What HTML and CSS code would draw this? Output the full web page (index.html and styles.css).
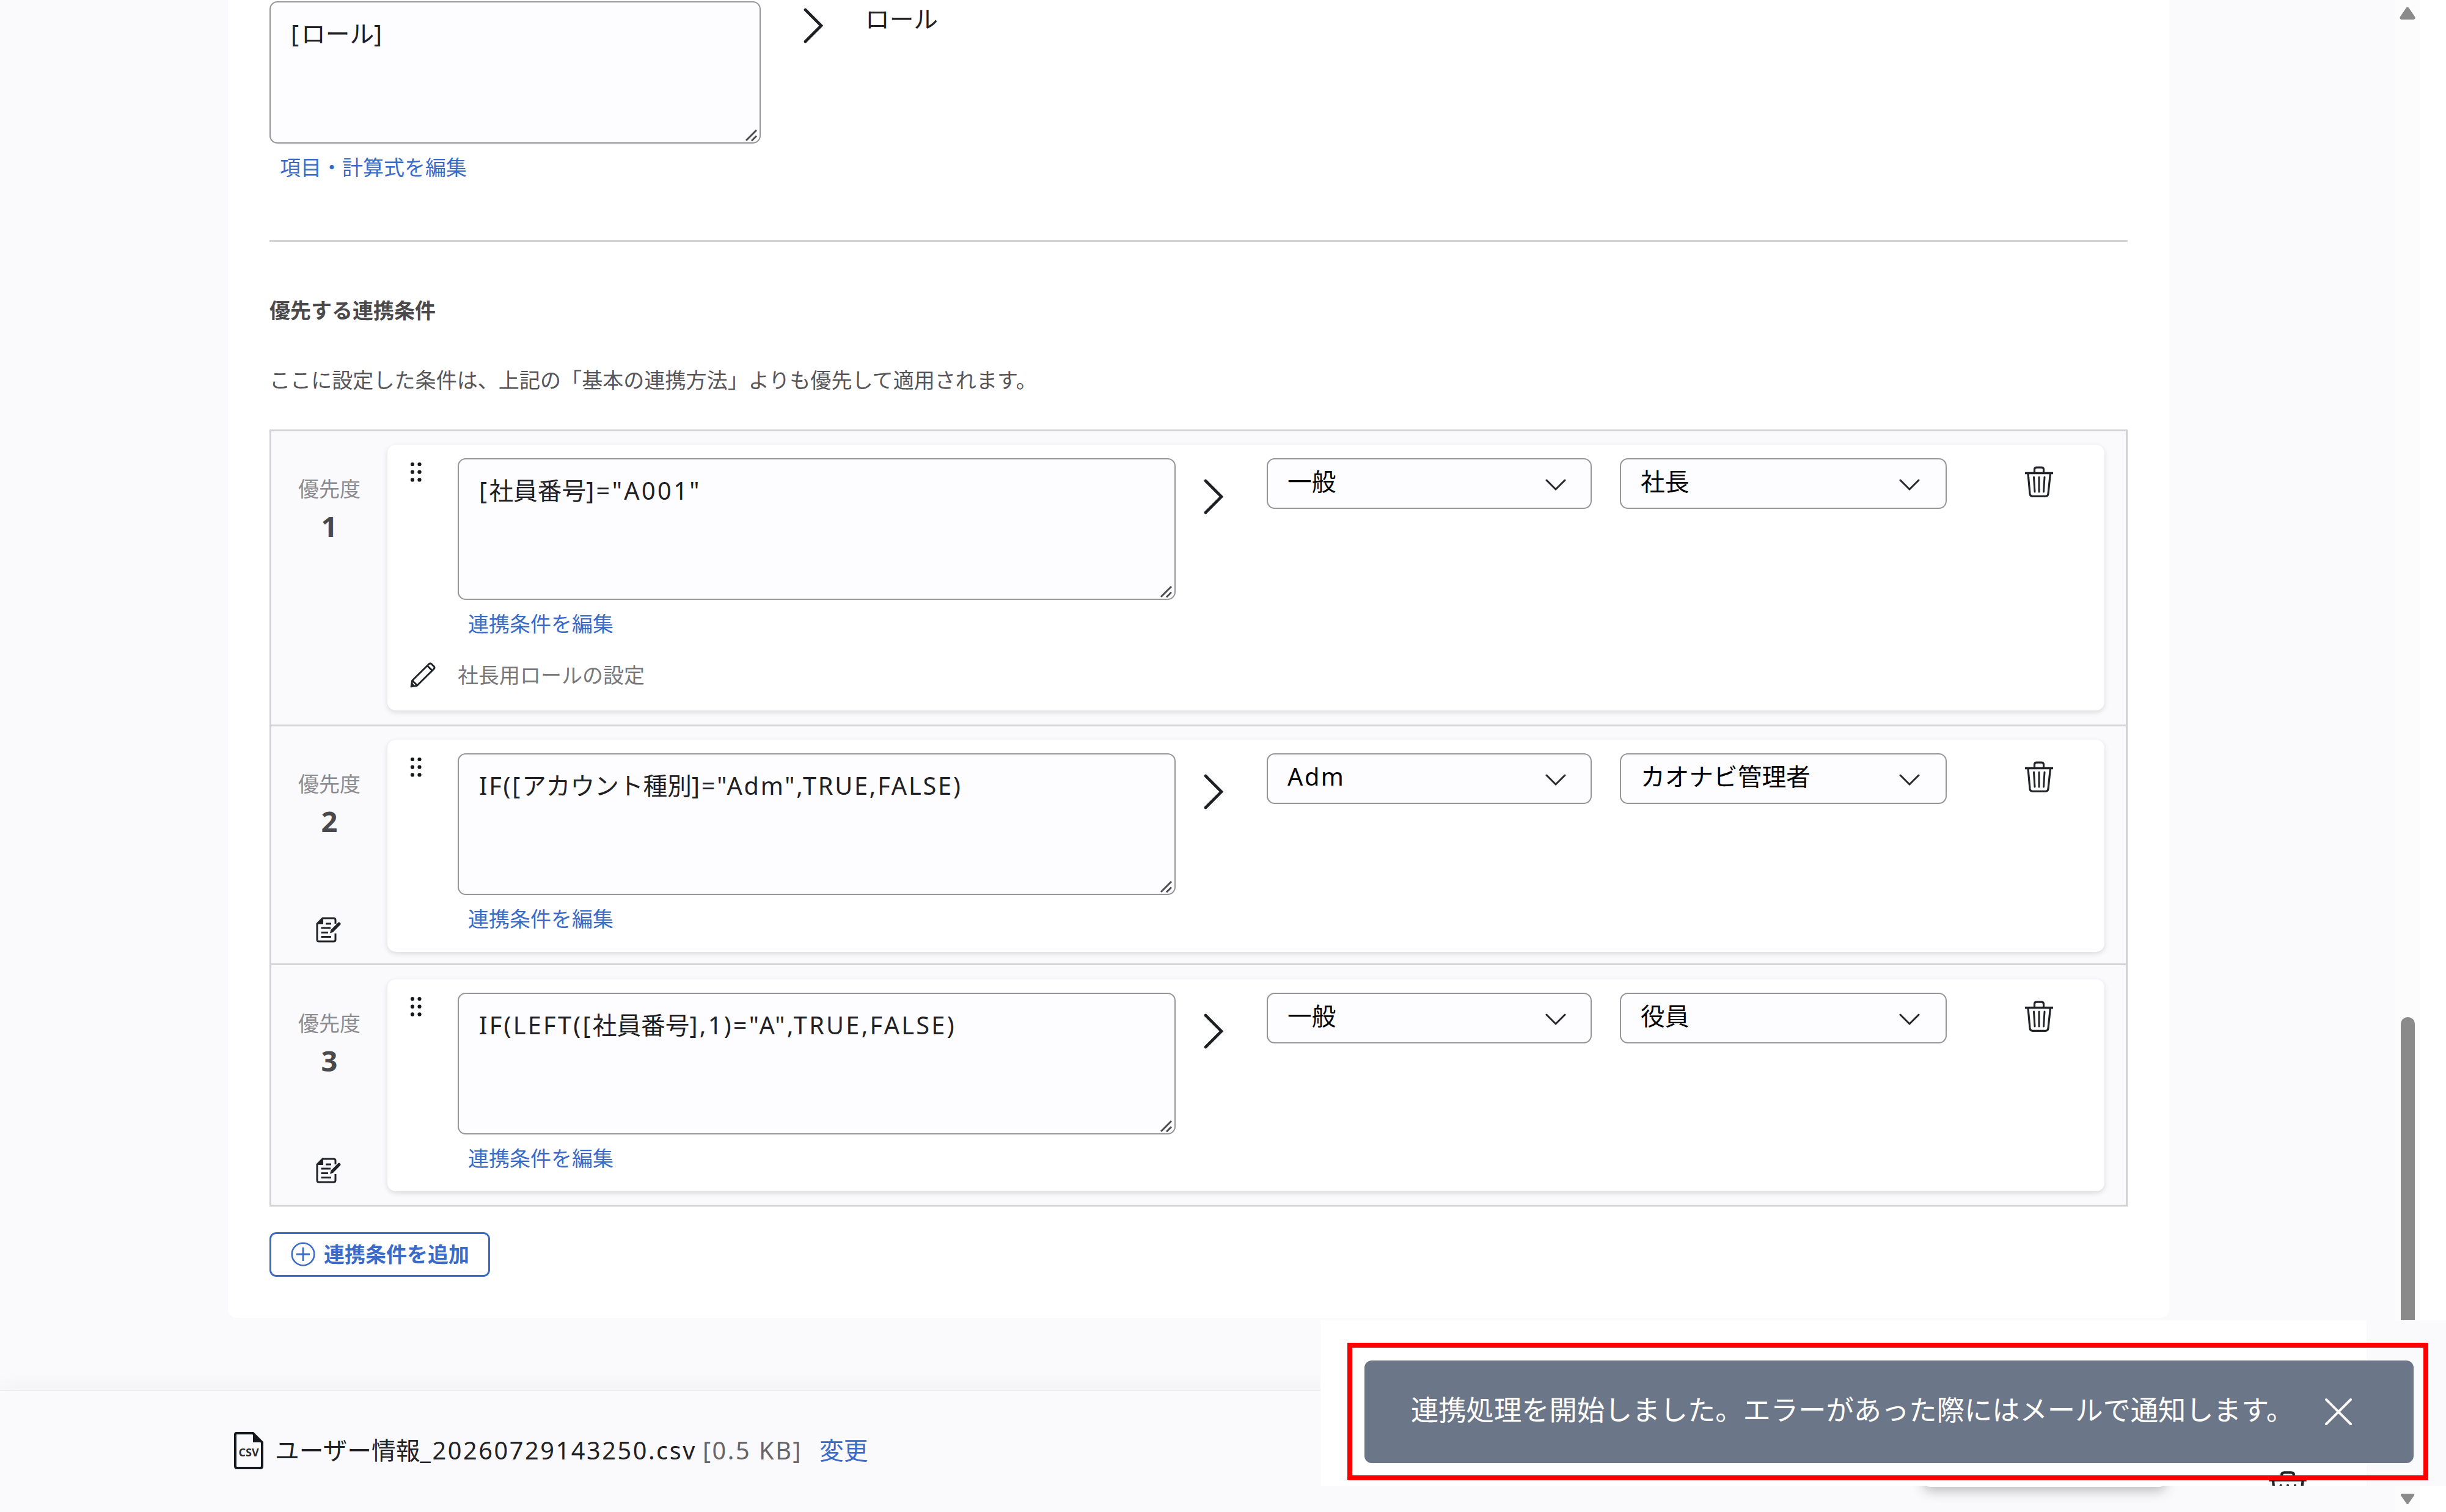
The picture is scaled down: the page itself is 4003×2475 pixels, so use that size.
FILE: index.html
```html
<!DOCTYPE html>
<html lang="ja">
<head>
  <meta charset="UTF-8" />
  <title>連携設定</title>
  <link rel="stylesheet" href="styles.css">
</head>
<body>
  <!-- icons -->
  <svg class="defs" width="0" height="0">
    <symbol id="i-arrow" viewBox="0 0 34 58">
      <path d="M3 3 L29 29 L3 55" fill="none" stroke="#1d1f24" stroke-width="4.6" stroke-linecap="round" />
    </symbol>
    <symbol id="i-chevron" viewBox="0 0 34 20">
      <path d="M2 2 L17 17 L32 2" fill="none" stroke="#25272c" stroke-width="3" stroke-linecap="round" />
    </symbol>
    <symbol id="i-resize" viewBox="0 0 22 22">
      <path d="M2 19 L19 2 M11 19.500 L19 11.500" fill="none" stroke="#4c4c4e" stroke-width="3" />
    </symbol>
    <symbol id="i-drag" viewBox="0 0 20 34">
      <g fill="#16181c">
        <circle cx="4" cy="4" r="3.1" /><circle cx="15.500" cy="4" r="3.100" />
        <circle cx="4" cy="16.700" r="3.100" /><circle cx="15.500" cy="16.700" r="3.100" />
        <circle cx="4" cy="29.400" r="3.100" /><circle cx="15.500" cy="29.400" r="3.100" />
      </g>
    </symbol>
    <symbol id="i-trash" viewBox="0 0 48 52">
      <g fill="none" stroke="#202328" stroke-width="3.2">
        <path d="M1 11.500 H47" stroke-width="3.600" />
        <path d="M16.500 11 V5.500 Q16.500 2.200 20 2.200 H28 Q31.500 2.200 31.500 5.500 V11" />
        <path d="M6 12 L9 45 Q9.500 49.300 13.500 49.300 H34.500 Q38.500 49.300 39 45 L42.500 12" />
        <path d="M15.500 18 L17 42 M24 18 V42 M33 18 L31.500 42" stroke-width="3" stroke-linecap="round" />
      </g>
    </symbol>
    <symbol id="i-pencil" viewBox="0 0 40 40">
      <g fill="none" stroke="#202328" stroke-width="2.800" stroke-linejoin="round">
        <path d="M2 38 L3.500 28.500 L29.500 2.800 Q31.500 1 33.500 2.800 L37.200 6.500 Q39 8.500 37.200 10.500 L11 36.500 Z" />
        <path d="M27 5.500 L34.500 13 M4 29 L11 36" />
      </g>
      <path d="M2 38 L3.200 32 L8 36.800 Z" fill="#202328" />
    </symbol>
    <symbol id="i-note" viewBox="0 0 42 42">
      <g fill="none" stroke="#202328" stroke-width="3">
        <path d="M32 11 V5 Q32 2 29 2 H11 L2 11 V37 Q2 40 5 40 H29 Q32 40 32 37 V27" />
        <path d="M16 11 H25 M8.500 18 H24 M8.500 25.500 H20 M8.500 32.500 H25" />
      </g>
      <path d="M2 12 L12 2 V12 Z" fill="#202328" />
      <path d="M23 26.500 L24.500 21 L36.500 9 Q38 8 39.500 9.500 Q41.500 11 40 12.700 L28 25 Z" fill="#202328" />
    </symbol>
  </svg>

  <div class="app">
    <div class="page">
      <main class="panel">
        <div class="mapping">
          <div class="mapping-source">
            <div class="formula formula-small"><span class="en">[</span>ロール<span class="en">]</span><svg class="resize"><use href="#i-resize" /></svg></div>
            <a class="link">項目・計算式を編集</a>
          </div>
          <svg class="arrow"><use href="#i-arrow" /></svg>
          <div class="mapping-target">ロール</div>
        </div>

        <h2>優先する連携条件</h2>
        <p class="lead">ここに設定した条件は、上記の「基本の連携方法」よりも優先して適用されます。</p>

        <div class="rules">
          <div class="rule rule-noted">
            <div class="rule-side">
              <span class="rule-label">優先度</span>
              <span class="rule-no">1</span>
            </div>
            <div class="rule-card">
              <svg class="drag"><use href="#i-drag" /></svg>
              <div class="rule-body">
                <div class="formula"><span class="en">[</span>社員番号<span class="en">]="A001"</span><svg class="resize"><use href="#i-resize" /></svg></div>
                <a class="link">連携条件を編集</a>
                <div class="note"><svg class="pencil"><use href="#i-pencil" /></svg>社長用ロールの設定</div>
              </div>
              <svg class="arrow"><use href="#i-arrow" /></svg>
              <div class="select">一般<svg class="chevron"><use href="#i-chevron" /></svg></div>
              <div class="select">社長<svg class="chevron"><use href="#i-chevron" /></svg></div>
              <svg class="trash"><use href="#i-trash" /></svg>
            </div>
          </div>

          <div class="rule">
            <div class="rule-side">
              <span class="rule-label">優先度</span>
              <span class="rule-no">2</span>
              <svg class="memo"><use href="#i-note" /></svg>
            </div>
            <div class="rule-card">
              <svg class="drag"><use href="#i-drag" /></svg>
              <div class="rule-body">
                <div class="formula"><span class="en">IF([</span>アカウント種別<span class="en">]="Adm",TRUE,FALSE)</span><svg class="resize"><use href="#i-resize" /></svg></div>
                <a class="link">連携条件を編集</a>
              </div>
              <svg class="arrow"><use href="#i-arrow" /></svg>
              <div class="select"><span class="en">Adm</span><svg class="chevron"><use href="#i-chevron" /></svg></div>
              <div class="select">カオナビ管理者<svg class="chevron"><use href="#i-chevron" /></svg></div>
              <svg class="trash"><use href="#i-trash" /></svg>
            </div>
          </div>

          <div class="rule rule-last">
            <div class="rule-side">
              <span class="rule-label">優先度</span>
              <span class="rule-no">3</span>
              <svg class="memo"><use href="#i-note" /></svg>
            </div>
            <div class="rule-card">
              <svg class="drag"><use href="#i-drag" /></svg>
              <div class="rule-body">
                <div class="formula"><span class="en">IF(LEFT([</span>社員番号<span class="en">],1)="A",TRUE,FALSE)</span><svg class="resize"><use href="#i-resize" /></svg></div>
                <a class="link">連携条件を編集</a>
              </div>
              <svg class="arrow"><use href="#i-arrow" /></svg>
              <div class="select">一般<svg class="chevron"><use href="#i-chevron" /></svg></div>
              <div class="select">役員<svg class="chevron"><use href="#i-chevron" /></svg></div>
              <svg class="trash"><use href="#i-trash" /></svg>
            </div>
          </div>
        </div>

        <button type="button" class="add-btn">
          <svg width="40" height="40" viewBox="0 0 40 40">
            <path d="M20 9 V31 M9 20 H31" stroke="#3a6bc9" stroke-width="2.8" />
            <circle cx="20" cy="20" r="18.300" fill="none" stroke="#3a6bc9" stroke-width="2.600" />
          </svg>
          連携条件を追加
        </button>
      </main>

      <footer class="footer">
        <svg class="csv" width="48" height="61" viewBox="0 0 48 61">
          <path d="M4 2 H31 L46 17 V56 Q46 59 43 59 H5 Q2 59 2 56 V4 Q2 2 4 2 Z" fill="none" stroke="#15181d" stroke-width="4" />
          <path d="M31 2 V17 H46 Z" fill="#15181d" />
          <text x="24" y="40" text-anchor="middle">CSV</text>
        </svg>
        <span class="file-name">ユーザー情報<span class="en">_20260729143250.csv</span></span>
        <span class="file-size en">[0.5 KB]</span>
        <a class="change">変更</a>
      </footer>
    </div>

    <div class="scrollbar">
      <svg width="28" height="23" viewBox="0 0 28 23"><path d="M14 4 L23.500 18 H4.500 Z" fill="#8a8a8a" stroke="#8a8a8a" stroke-width="6" stroke-linejoin="round" /></svg>
      <div class="thumb"></div>
      <svg width="28" height="23" viewBox="0 0 28 23"><path d="M14 17 L23 4 H5 Z" fill="#8a8a8a" stroke="#8a8a8a" stroke-width="4" stroke-linejoin="round" /></svg>
    </div>
  </div>

  <div class="button-shadow"></div>
  <div class="toast-area">
    <svg class="toast-trash"><use href="#i-trash" /></svg>
    <div class="toast-frame">
      <div class="toast">
        <span>連携処理を開始しました。エラーがあった際にはメールで通知します。</span>
        <svg width="46" height="46" viewBox="0 0 46 46">
          <path d="M3 3 L43 43 M43 3 L3 43" stroke="#fff" stroke-width="4" stroke-linecap="round" />
        </svg>
      </div>
    </div>
  </div>
</body>
</html>
```

FILE: styles.css
```css
* {
  box-sizing: border-box;
}

body {
  margin: 0;
  width: 4003px;
  height: 2475px;
  overflow: hidden;
  position: relative;
  background: #fff;
  color: #1f2125;
  font-family: "Noto Sans", "Noto Sans CJK JP", sans-serif;
  font-size: 39.7px;
  line-height: 60px;
  white-space: nowrap;
}

svg {
  display: block;
  flex: none;
}

.defs {
  position: absolute;
}

.en {
  letter-spacing: 0.064em;
}

.app {
  display: flex;
  height: 2475px;
}

.page {
  display: flex;
  flex-direction: column;
  width: 3920px;
  background: #fafafc;
}

.panel {
  width: 3177px;
  height: 2157px;
  margin-left: 373px;
  padding: 2px 68px 0 68px;
  background: #fff;
  border-radius: 0 0 14px 14px;
}

/* mapping row */
.mapping {
  display: flex;
  height: 394px;
  border-bottom: 3px solid #d4d4d6;
}

.mapping .arrow {
  margin: 11px 0 0 70px;
}

.mapping-target {
  margin: -1px 0 0 67px;
}

.formula {
  position: relative;
  width: 1175px;
  height: 232px;
  padding: 21px 33px;
  background: #fdfdff;
  border: 2.5px solid #96969a;
  border-radius: 13px;
}

.formula .en {
  letter-spacing: 0.07em;
}

.rule-noted .formula .en {
  letter-spacing: 0.085em;
}

.rule-last .formula .en {
  letter-spacing: 0.082em;
}

.formula-small {
  width: 804px;
  height: 233px;
}

.formula-small .en {
  letter-spacing: 0.1em;
}

.resize {
  position: absolute;
  right: 2px;
  bottom: 0;
  width: 22px;
  height: 22px;
}

.link {
  display: block;
  padding-left: 17px;
  margin-top: 15px;
  color: #3a6bc9;
  font-size: 34px;
  line-height: 48px;
}

.arrow {
  width: 34px;
  height: 58px;
}

h2 {
  margin: 87px 0 0;
  color: #4a4a4d;
  font-size: 34px;
  line-height: 50px;
}

.lead {
  margin: 64px 0 0;
  color: #55555a;
  font-size: 34.1px;
  line-height: 50px;
}

/* rule list */
.rules {
  margin-top: 56px;
  background: #fafafc;
  border: 3px solid #d2d2d4;
}

.rule {
  display: flex;
  height: 391px;
  padding: 22px 34px 0 0;
  border-bottom: 3px solid #d2d2d4;
}

.rule-noted {
  height: 483px;
}

.rule-last {
  height: 392px;
  padding-top: 23px;
  border-bottom: 0;
}

.rule-side {
  display: flex;
  flex-direction: column;
  align-items: center;
  width: 190px;
}

.rule-label {
  margin-top: 47px;
  color: #8c8c90;
  font-size: 34px;
  line-height: 50px;
}

.rule-no {
  margin-top: 6px;
  color: #4a4a4d;
  font-size: 47px;
  font-weight: bold;
  line-height: 60px;
}

.memo {
  width: 42px;
  height: 42px;
  margin: 127px 3px 0 0;
}

.rule-last .memo {
  margin-top: 129px;
}

.rule-card {
  display: flex;
  width: 2810px;
  height: 347px;
  padding: 22px 0 0 35px;
  background: #fff;
  border-radius: 14px;
  box-shadow: 0 3px 8px rgba(0, 0, 0, 0.13);
}

.rule-noted .rule-card {
  height: 435px;
}

.drag {
  width: 20px;
  height: 34px;
  margin: 6px 58px 0 2px;
}

.rule .arrow {
  margin: 34px 0 0 46px;
}

.note {
  display: flex;
  align-items: center;
  margin: 33px 0 0 -78px;
  color: #77777b;
  font-size: 34px;
  line-height: 54px;
}

.pencil {
  width: 42px;
  height: 42px;
  margin-right: 36px;
}

.select {
  display: flex;
  justify-content: space-between;
  width: 532px;
  height: 83px;
  margin-left: 69px;
  padding: 6px 40px 0 32px;
  background: #fdfdff;
  border: 2.5px solid #96969a;
  border-radius: 13px;
  color: #000;
}

.select + .select {
  width: 535px;
  margin-left: 46px;
  padding-right: 42px;
}

.chevron {
  width: 34px;
  height: 20px;
  margin-top: 26px;
}

.trash {
  width: 48px;
  height: 52px;
  margin: 13px 0 0 127px;
}

.add-btn {
  display: flex;
  align-items: center;
  gap: 14px;
  width: 361px;
  height: 73px;
  margin-top: 42px;
  padding: 0 0 2px 32px;
  background: #fff;
  border: 3px solid #3a6bc9;
  border-radius: 11px;
  color: #3a6bc9;
  font: bold 34px/50px "Noto Sans", "Noto Sans CJK JP", sans-serif;
}

/* footer */
.footer {
  display: flex;
  align-items: flex-start;
  height: 200px;
  margin-top: 118px;
  padding: 67px 0 0 383px;
  border-top: 2px solid #ededef;
  box-shadow: 0 -8px 32px rgba(0, 0, 0, 0.035);
}

.csv {
  margin-right: 19px;
}

.csv text {
  fill: #2a2c30;
  font-size: 18px;
  font-weight: bold;
}

.file-size {
  margin-left: 10px;
  color: #66666a;
}

.change {
  margin-left: 28px;
  color: #3a6bc9;
}

/* scrollbar */
.scrollbar {
  display: flex;
  flex-direction: column;
  align-items: center;
  width: 40px;
  padding-top: 11px;
  background: #fcfcfc;
}

.thumb {
  width: 23px;
  height: 760px;
  margin: 1631px 0 18px;
  background: #8a8a8a;
  border-radius: 12px;
}

/* toast, over the page */
.toast-area {
  position: absolute;
  left: 2161px;
  top: 2161px;
  width: 1842px;
  height: 271px;
  overflow: hidden;
  background: linear-gradient(to right, #fff 1712px, #fafafc 1712px);
}

.toast-frame {
  position: relative;
  width: 1769px;
  height: 225px;
  margin: 37px 0 0 44px;
  padding: 21px 16px 0 20px;
  border: 8px solid #f00;
}

.toast {
  display: flex;
  align-items: center;
  justify-content: space-between;
  height: 168px;
  padding: 0 100px 0 76px;
  background: #6b7688;
  border-radius: 12px;
  color: #fff;
  font-size: 45.3px;
}

.toast span {
  padding-bottom: 6px;
}

.toast-trash {
  position: absolute;
  left: 1551px;
  top: 246px;
  width: 64px;
  height: 70px;
}

.button-shadow {
  position: absolute;
  left: 3148px;
  top: 2400px;
  width: 396px;
  height: 34px;
  border-radius: 10px;
  box-shadow: 0 6px 20px rgba(0, 0, 0, 0.26);
}
```
